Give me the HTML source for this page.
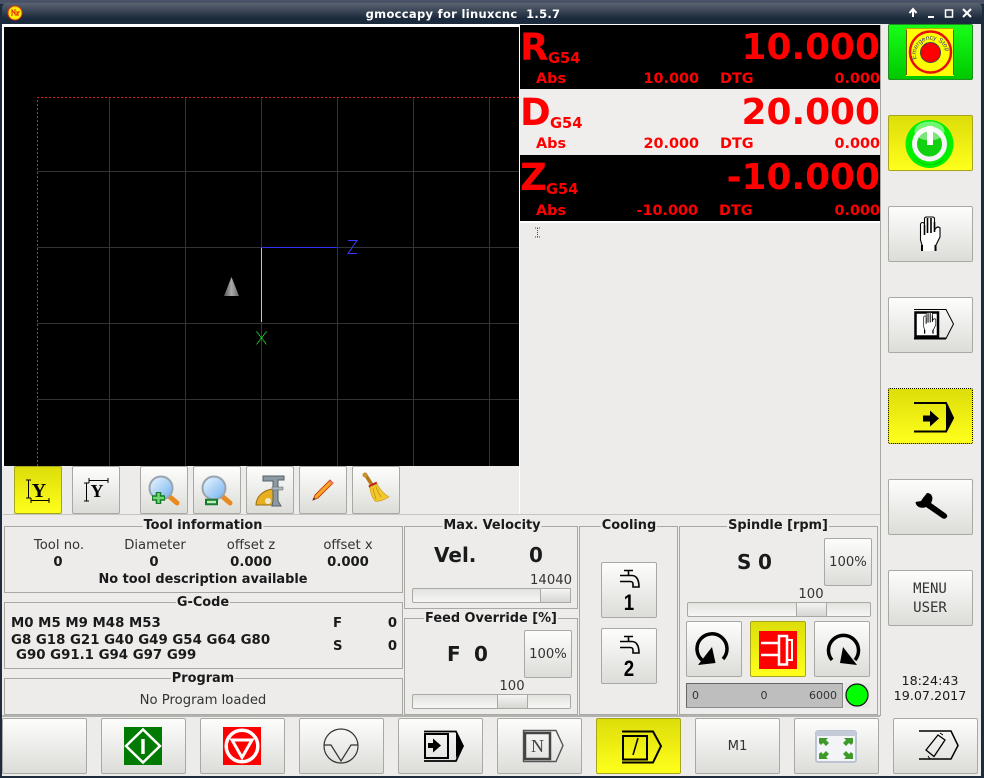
<!DOCTYPE html>
<html><head><meta charset="utf-8"><style>
html,body{margin:0;padding:0}
body{width:984px;height:778px;overflow:hidden;position:relative;background:#edeceb;font-family:"DejaVu Sans","Liberation Sans",sans-serif;color:#1a1a1a;font-size:13.2px}
div{position:absolute;box-sizing:border-box}
.b{border:1px solid #a9a9a4;border-radius:2px;background:linear-gradient(#fdfdfc,#dcdcd8)}
.y{border:1px solid #a5a520;border-radius:2px;background:linear-gradient(#dddd0a,#ffff1c)}
.f{border:1px solid #a9a9a4}
.t{white-space:nowrap;line-height:16px;height:16px}
.c{transform:translateX(-50%)}
.r{transform:translateX(-100%)}
.h{font-weight:bold;background:#edeceb;padding:0 1px;font-size:12.9px}
.w{font-weight:bold}
.d{color:#f00;font-weight:bold;white-space:nowrap;line-height:1}
.sl{border:1px solid #a9a9a4;border-radius:2px;background:linear-gradient(#e2e2de,#f6f6f5)}
.th{border:1px solid #a9a9a4;background:linear-gradient(#f4f4f3,#d6d6d2)}
</style></head><body>
<!-- window chrome -->
<div style="left:0;top:0;width:984px;height:778px;background:#1d2b3d"></div>
<div style="left:0;top:0;width:984px;height:4px;background:#4a5268"></div>
<div style="left:2px;top:3px;width:980px;height:22px;border-radius:5px 5px 0 0;background:linear-gradient(#5b6270,#1b2a3c 70%)"></div>
<div class="t w" style="left:463px;top:6px;color:#fff;font-size:11.5px;letter-spacing:.31px;transform:translateX(-50%);white-space:pre">gmoccapy for linuxcnc  1.5.7</div>
<div style="left:2px;top:24px;width:979px;height:752px;background:#edeceb"></div>
<div style="left:2px;top:24px;width:878px;height:3px;background:#fff"></div>
<div style="left:2px;top:24px;width:2px;height:442px;background:#fff"></div>
<!-- gl canvas -->
<div style="left:4px;top:27px;width:515px;height:439px;background:#000"></div>
<div style="left:519px;top:25px;width:1px;height:490px;background:#fff"></div>
<!-- DRO -->
<div style="left:520px;top:25px;width:360px;height:64px;background:#000"></div>
<div style="left:520px;top:89px;width:360px;height:65px;background:#f0eeed"></div>
<div style="left:520px;top:155px;width:360px;height:66px;background:#000"></div>
<div style="left:520px;top:221px;width:360px;height:2px;background:#fff"></div>
<div style="left:880px;top:25px;width:1px;height:691px;background:#a9a9a4"></div>
<div style="left:2px;top:715px;width:878px;height:2px;background:#b2b2ae"></div>
<div style="left:3px;top:514px;width:877px;height:1px;background:#c4c4c0"></div>

<div class="d" style="left:520px;top:29px;font-size:37px">R</div>
<div class="d" style="left:548px;top:52px;font-size:14.67px">G54</div>
<div class="d r" style="left:880px;top:30px;font-size:35.9px">10.000</div>
<div class="d" style="left:536px;top:72px;font-size:14.4px">Abs</div>
<div class="d r" style="left:699px;top:72px;font-size:14.4px">10.000</div>
<div class="d" style="left:720px;top:72px;font-size:14.4px">DTG</div>
<div class="d r" style="left:880px;top:72px;font-size:14.4px">0.000</div>

<div class="d" style="left:520px;top:94px;font-size:37px">D</div>
<div class="d" style="left:550px;top:117px;font-size:14.67px">G54</div>
<div class="d r" style="left:880px;top:95px;font-size:35.9px">20.000</div>
<div class="d" style="left:536px;top:137px;font-size:14.4px">Abs</div>
<div class="d r" style="left:699px;top:137px;font-size:14.4px">20.000</div>
<div class="d" style="left:720px;top:137px;font-size:14.4px">DTG</div>
<div class="d r" style="left:880px;top:137px;font-size:14.4px">0.000</div>

<div class="d" style="left:520px;top:159px;font-size:37px">Z</div>
<div class="d" style="left:546px;top:183px;font-size:14.67px">G54</div>
<div class="d r" style="left:880px;top:160px;font-size:35.9px">-10.000</div>
<div class="d" style="left:536px;top:204px;font-size:14.4px">Abs</div>
<div class="d r" style="left:698px;top:204px;font-size:14.4px">-10.000</div>
<div class="d" style="left:719px;top:204px;font-size:14.4px">DTG</div>
<div class="d r" style="left:880px;top:204px;font-size:14.4px">0.000</div>

<!-- toolbar -->
<div class="y" style="left:14px;top:466px;width:48px;height:48px"></div>
<div class="b" style="left:72px;top:466px;width:48px;height:48px"></div>
<div class="b" style="left:140px;top:466px;width:48px;height:48px"></div>
<div class="b" style="left:193px;top:466px;width:48px;height:48px"></div>
<div class="b" style="left:246px;top:466px;width:48px;height:48px"></div>
<div class="b" style="left:299px;top:466px;width:48px;height:48px"></div>
<div class="b" style="left:352px;top:466px;width:48px;height:48px"></div>

<!-- frames -->
<div class="f" style="left:4px;top:526px;width:399px;height:67px"></div>
<div class="f" style="left:4px;top:602px;width:399px;height:67px"></div>
<div class="f" style="left:4px;top:678px;width:399px;height:37px"></div>
<div class="f" style="left:404px;top:526px;width:174px;height:83px"></div>
<div class="f" style="left:404px;top:618px;width:174px;height:97px"></div>
<div class="f" style="left:579px;top:526px;width:99px;height:189px"></div>
<div class="f" style="left:679px;top:526px;width:199px;height:189px"></div>

<div class="t h c" style="left:203px;top:518px">Tool information</div>
<div class="t h c" style="left:203px;top:595px">G-Code</div>
<div class="t h c" style="left:203px;top:671px">Program</div>
<div class="t h c" style="left:492px;top:518px">Max. Velocity</div>
<div class="t h c" style="left:491px;top:611px">Feed Override [%]</div>
<div class="t h c" style="left:629px;top:518px">Cooling</div>
<div class="t h c" style="left:778px;top:518px">Spindle [rpm]</div>

<div class="t c" style="left:59px;top:538px;color:#333">Tool no.</div>
<div class="t c" style="left:155px;top:538px;color:#333">Diameter</div>
<div class="t c" style="left:251px;top:538px;color:#333">offset z</div>
<div class="t c" style="left:348px;top:538px;color:#333">offset x</div>
<div class="t w c" style="left:58px;top:555px">0</div>
<div class="t w c" style="left:154px;top:555px">0</div>
<div class="t w c" style="left:251px;top:555px">0.000</div>
<div class="t w c" style="left:348px;top:555px">0.000</div>
<div class="t w c" style="left:203px;top:572px;font-size:12.9px">No tool description available</div>

<div class="t w" style="left:11px;top:616px;font-size:13.33px">M0 M5 M9 M48 M53</div>
<div class="t w" style="left:11px;top:633px;font-size:13.33px">G8 G18 G21 G40 G49 G54 G64 G80</div>
<div class="t w" style="left:16px;top:648px;font-size:13.33px">G90 G91.1 G94 G97 G99</div>
<div class="t w" style="left:333px;top:615.5px">F</div>
<div class="t w" style="left:333px;top:639px">S</div>
<div class="t w r" style="left:397px;top:615.5px">0</div>
<div class="t w r" style="left:397px;top:639px">0</div>
<div class="t c" style="left:203px;top:693px;color:#333">No Program loaded</div>

<div class="w" style="left:434px;top:543px;font-size:20px;line-height:24px;white-space:nowrap">Vel.</div>
<div class="w" style="left:529px;top:543px;font-size:20px;line-height:24px">0</div>
<div class="t r" style="left:572px;top:573px;color:#333">14040</div>
<div class="sl" style="left:412px;top:588px;width:159px;height:15px"></div>
<div class="th" style="left:540px;top:588px;width:31px;height:15px"></div>

<div class="w" style="left:447px;top:642px;font-size:20px;line-height:24px">F</div>
<div class="w" style="left:474px;top:642px;font-size:20px;line-height:24px">0</div>
<div class="b t" style="left:524px;top:630px;width:48px;height:48px;line-height:47px;text-align:center;color:#333">100%</div>
<div class="t c" style="left:512px;top:679px;color:#333">100</div>
<div class="sl" style="left:412px;top:694px;width:159px;height:15px"></div>
<div class="th" style="left:497px;top:694px;width:31px;height:15px"></div>

<div class="b" style="left:601px;top:562px;width:56px;height:56px"></div>
<div class="b" style="left:601px;top:628px;width:56px;height:56px"></div>

<div class="w" style="left:737px;top:550px;font-size:20px;line-height:24px">S</div>
<div class="w" style="left:758px;top:550px;font-size:20px;line-height:24px">0</div>
<div class="b t" style="left:824px;top:538px;width:48px;height:48px;line-height:47px;text-align:center;color:#333">100%</div>
<div class="t c" style="left:811px;top:587px;color:#333">100</div>
<div class="sl" style="left:687px;top:602px;width:184px;height:15px"></div>
<div class="th" style="left:796px;top:602px;width:31px;height:15px"></div>
<div class="b" style="left:686px;top:621px;width:56px;height:56px"></div>
<div class="y" style="left:750px;top:621px;width:56px;height:56px"></div>
<div class="b" style="left:814px;top:621px;width:56px;height:56px"></div>
<div style="left:686px;top:683px;width:157px;height:25px;background:#bebebe;border:1px solid #8a8a8a;border-top-color:#666;border-left-color:#666"></div>
<div class="t" style="left:692px;top:688px;font-size:11px;color:#333">0</div>
<div class="t c" style="left:764px;top:688px;font-size:11px;color:#333">0</div>
<div class="t r" style="left:837px;top:688px;font-size:11px;color:#333">6000</div>
<div style="left:845px;top:683px;width:25px;height:25px;background:#e6e6e6"></div>

<!-- right column -->
<div style="left:888px;top:24px;width:85px;height:56px;border:1px solid #1f8f1f;border-radius:2px;background:linear-gradient(#18ff18,#00c800)"></div>
<div class="y" style="left:888px;top:115px;width:85px;height:56px"></div>
<div class="b" style="left:888px;top:206px;width:85px;height:56px"></div>
<div class="b" style="left:888px;top:297px;width:85px;height:56px"></div>
<div class="y" style="left:888px;top:388px;width:85px;height:56px;border:1px dotted #000"></div>
<div class="b" style="left:888px;top:479px;width:85px;height:56px"></div>
<div class="b" style="left:888px;top:570px;width:85px;height:56px"></div>
<div class="c" style="left:930px;top:580px;font-family:'DejaVu Sans Mono',monospace;font-size:14px;line-height:18.5px;text-align:center;color:#333;white-space:pre">MENU
USER</div>
<div class="t c" style="left:930px;top:673px;font-size:12.7px">18:24:43</div>
<div class="t c" style="left:930px;top:688px;font-size:12.7px">19.07.2017</div>

<!-- bottom row -->
<div class="b" style="left:2px;top:718px;width:85px;height:56px"></div>
<div class="b" style="left:101px;top:718px;width:85px;height:56px"></div>
<div class="b" style="left:200px;top:718px;width:85px;height:56px"></div>
<div class="b" style="left:299px;top:718px;width:85px;height:56px"></div>
<div class="b" style="left:398px;top:718px;width:85px;height:56px"></div>
<div class="b" style="left:497px;top:718px;width:85px;height:56px"></div>
<div class="y" style="left:596px;top:718px;width:85px;height:56px"></div>
<div class="b t" style="left:695px;top:718px;width:85px;height:56px;line-height:55px;text-align:center;color:#333">M1</div>
<div class="b" style="left:794px;top:718px;width:85px;height:56px"></div>
<div class="b" style="left:893px;top:718px;width:85px;height:56px"></div>

<svg width="984" height="778" viewBox="0 0 984 778" style="position:absolute;left:0;top:0" fill="none">
<defs>
<linearGradient id="cone" x1="0" y1="0" x2="1" y2="0"><stop offset="0" stop-color="#555"/><stop offset=".5" stop-color="#aaa"/><stop offset="1" stop-color="#666"/></linearGradient>
<linearGradient id="bin" x1="0" y1="0" x2="1" y2="1"><stop offset="0" stop-color="#f0f8ff"/><stop offset="1" stop-color="#6fb0ee"/></linearGradient>
<path id="arc" d="M917 60 A15 15 0 1 1 945 60"/>
<g id="hand">
<path d="M922 251V245L920.500 240V225Q920.500 222.500 922.500 222.500Q924.500 222.500 924.500 225V219Q924.500 217 926.500 217H932.500Q934.500 217 934.500 219V230L936 228Q938 226 940 228V237L937 243 935.500 246V251" fill="#fff" stroke="#000" stroke-width="1.100"/>
<path d="M924.500 225V235M927.500 218V233M931 218V233M934.500 222V232" stroke="#000" stroke-width="1.600"/>
<path d="M922 245V251M935.500 245V251" stroke="#000" stroke-width="2"/>
</g>
</defs>
<!-- title icons -->
<circle cx="15" cy="13" r="7" fill="#ffee00" stroke="#e83010" stroke-width="1"/>
<path d="M12 16V10L15 14V9M16 12h3l-3 3h3" stroke="#e82010" stroke-width="1"/>
<path d="M913 17V10M909.500 13l3.500-4 3.500 4" stroke="#fff" stroke-width="2"/>
<path d="M928 17h6" stroke="#fff" stroke-width="2"/>
<rect x="945.500" y="10" width="7" height="7" stroke="#fff" stroke-width="1.500"/>
<path d="M963 9l8 8M971 9l-8 8" stroke="#fff" stroke-width="2"/>
<!-- grid -->
<g stroke="#333" stroke-width="1">
<path d="M109.500 97V466M185.500 97V466M261.500 97V466M337.500 97V466M413.500 97V466M489.500 97V466"/>
<path d="M37 171.500H519M37 247.500H519M37 323.500H519M37 399.500H519"/>
</g>
<path d="M37.500 466V97.500H519" stroke="#d82020" stroke-dasharray="2 2"/>
<path d="M261.500 247V322" stroke="#88f088"/>
<path d="M261 247.500H337" stroke="#3030f0"/>
<path d="M348 240.500h9l-9 13h9" stroke="#3a3aff"/>
<path d="M256.500 331.500l10 13M266.500 331.500l-10 13" stroke="#30e030" stroke-dasharray="1.500 .5"/>
<path d="M231.500 277L224 296H239Z" fill="url(#cone)"/>
<!-- cursor -->
<path d="M535 228h5M537.500 228v9M535 237h5" stroke="#444" stroke-dasharray="1 1"/>
<!-- toolbar icons -->
<path d="M28.500 480V498M26 480h5M26 498h5M31 500.500H49M31 498v5M49 498v5" stroke="#000"/>
<text x="39" y="497" font-family="'Liberation Serif',serif" font-weight="bold" font-size="20" fill="#000" text-anchor="middle">Y</text>
<path d="M86.500 483V501M84 483h5M84 501h5M89 480.500H108M89 478v5M108 478v5" stroke="#000"/>
<text x="97" y="497" font-family="'Liberation Serif',serif" font-weight="bold" font-size="18" fill="#000" text-anchor="middle">Y</text>
<!-- magnifiers -->
<path d="M170 497l7 6" stroke="#e88a20" stroke-width="5" stroke-linecap="round"/>
<circle cx="161" cy="488" r="11.500" fill="url(#bin)" stroke="#9aa4ae" stroke-width="2"/>
<path d="M152 498h13M158.500 492v12" stroke="#167a2a" stroke-width="5.500"/>
<path d="M153 498h11M158.500 493v10" stroke="#6fd96f" stroke-width="2.500"/>
<path d="M223 497l7 6" stroke="#e88a20" stroke-width="5" stroke-linecap="round"/>
<circle cx="214" cy="488" r="11.500" fill="url(#bin)" stroke="#9aa4ae" stroke-width="2"/>
<path d="M205 502h13" stroke="#167a2a" stroke-width="6.500"/>
<path d="M207 502h9" stroke="#b6eeb6" stroke-width="2.500"/>
<!-- measuring tool -->
<path d="M256 505C256 497 263 490 273 489L279 505Z" fill="#e8b020" stroke="#9a7010"/>
<circle cx="268" cy="501" r="3" fill="#f0e9d0"/>
<path d="M263 476h21v4h-6v21l3 5h-9l1-5v-20h-10Z" fill="#8c9aa2" stroke="#566068"/>
<path d="M272 487h11v3h-11z" fill="#aab6bc" stroke="#566068" stroke-width=".5"/>
<!-- pencil -->
<path d="M315 495l-2 5 5-2 15-15-3-3Z" fill="#f8a820" stroke="#c83818" stroke-width=".9"/>
<path d="M313 500l1-2.500 1.500 1.500z" fill="#222"/>
<path d="M330 481l3 3" stroke="#f07060" stroke-width="2.500"/>
<!-- broom -->
<path d="M365 474l7 11" stroke="#b87818" stroke-width="3.500"/>
<circle cx="365" cy="475" r="2.500" fill="#c89030"/>
<path d="M369 487l8-4" stroke="#c0202a" stroke-width="3"/>
<path d="M370 487L377 484C380 490 384 494 389 497C384 500 378 502 375 501C372 497 370 492 370 487Z" fill="#f2c82c" stroke="#d09a10" stroke-width=".7"/>
<path d="M376 499c-1-4-3-8-3-11M381 497c-2-3-4-7-5-10" stroke="#b88a10" stroke-width=".7"/>
<!-- e-stop -->
<rect x="906.500" y="28.500" width="47" height="47" fill="#ffff00" stroke="#6a5a10"/>
<path d="M906 29h48M906 75.500h48" stroke="#ffff00"/>
<circle cx="930.500" cy="52" r="20.500" stroke="#e8100c" stroke-width="2.500"/>
<circle cx="930.500" cy="52.500" r="10" fill="#ff0000" stroke="#444" stroke-width="1"/>
<text font-family="'Liberation Sans',sans-serif" font-size="6.500" fill="#303090"><textPath href="#arc" startOffset="1">Emergency Stop</textPath></text>
<!-- power -->
<circle cx="929.500" cy="144" r="24" fill="#00f000"/>
<circle cx="929.500" cy="144" r="15" fill="#10d010" stroke="#f4f4f4" stroke-width="5"/>
<path d="M915 158a19 19 0 0 0 29 0c-3 5-9 7-14.500 7s-11-2-14.500-7Z" fill="#333" opacity=".65"/>
<ellipse cx="929.500" cy="131" rx="15" ry="9.500" fill="#fff" opacity=".45"/>
<path d="M930 126V145" stroke="#fff" stroke-width="6"/>
<!-- hand -->
<use href="#hand"/>
<!-- manual mode -->
<path d="M914 309.500H946L953.500 324 946 338.500H914" stroke="#000"/>
<path d="M914 338.500H946" stroke="#000" stroke-width="2"/>
<rect x="915.500" y="312.500" width="22.500" height="24" fill="#fff" stroke="#000" stroke-width="2.500"/>
<use href="#hand" transform="translate(353 178) scale(.62)"/>
<!-- auto mode sidebar -->
<path d="M914 403H946L953 418 946 431.500H914" stroke="#000" stroke-width="2"/>
<path d="M946 403l8 15-8 15Z" fill="#000"/>
<path d="M923 418.500h8" stroke="#000" stroke-width="6"/>
<path d="M930 410.500l9 8-9 8Z" fill="#000"/>
<!-- wrench -->
<path d="M927 493L923 498 921 501 915.500 502C916 507 921 509 926 507L942 518Q945 520 947 517Q948 515 945 513L931 503C934 498 932 493 927 493Z" fill="#000"/>
<!-- faucets -->
<g stroke="#000" stroke-width="1.600">
<path d="M624 570.500H633M628.500 570V575M620 575.500H632C636 575.500 639 579 639 587H633V584C633 582 632 581.500 630 581.500H620"/>
<path d="M624 636.500H633M628.500 636V641M620 641.500H632C636 641.500 639 645 639 653H633V650C633 648 632 647.500 630 647.500H620"/>
</g>
<text x="629" y="610" font-family="'Liberation Sans',sans-serif" font-weight="bold" font-size="22" fill="#000" text-anchor="middle" transform="translate(94.35 0) scale(.85 1)">1</text>
<text x="629" y="676" font-family="'Liberation Sans',sans-serif" font-weight="bold" font-size="22" fill="#000" text-anchor="middle" transform="translate(94.35 0) scale(.85 1)">2</text>
<!-- spindle icons -->
<path d="M723 659A15 15 0 1 0 702 660" stroke="#000" stroke-width="3.500"/>
<path d="M712 647L715.500 663 698 665Z" fill="#000"/>
<path d="M832 660A15 15 0 1 1 855 660" stroke="#000" stroke-width="3.500"/>
<path d="M843 647L840 663 857 665Z" fill="#000"/>
<rect x="759" y="631" width="38" height="38" fill="#ff0000"/>
<path d="M761 643H779M761 655H779" stroke="#fff" stroke-width="2.500"/>
<rect x="779" y="636" width="8" height="28.500" stroke="#fff" stroke-width="2.500"/>
<rect x="787" y="640" width="5" height="20" stroke="#fff" stroke-width="2"/>
<circle cx="857" cy="695" r="11" fill="#00ff00" stroke="#111" stroke-width="1.200"/>
<!-- edit bottom -->
<path d="M919 731H951L958 745.500 951 759H919" stroke="#000" stroke-width="1.500"/>
<path d="M926 750L938 735 945 740 934 756.500Z" stroke="#000" stroke-width="1.300"/>
<path d="M928 756l2 3M940 733l3 2" stroke="#000"/>
<!-- cycle start -->
<rect x="124" y="727" width="38" height="38" fill="#007a00"/>
<path d="M143 729.500L160 746 143 762.500 126 746Z" stroke="#fff" stroke-width="2.500"/>
<rect x="141.300" y="739" width="3.400" height="15" fill="#fff"/>
<!-- stop -->
<rect x="223" y="727" width="38" height="38" fill="#ff0000"/>
<circle cx="242" cy="746" r="15.800" stroke="#fff" stroke-width="3.500"/>
<path d="M232 740H252L242 757.500Z" stroke="#fff" stroke-width="3"/>
<!-- from line -->
<circle cx="341" cy="746" r="17" stroke="#333" stroke-width="1.200"/>
<path d="M324 745H331L341 761 351 745H358" stroke="#333" stroke-width="1.200"/>
<!-- step -->
<rect x="425" y="734" width="23" height="24" stroke="#000" stroke-width="2"/>
<path d="M424 731.500H456L463 746 456 761H424" stroke="#000" stroke-width="1.700"/>
<path d="M456 733l8 13-8 12Z" fill="#000"/>
<path d="M428 745.500h7" stroke="#000" stroke-width="5"/>
<path d="M433 738.500l8 7-8 7Z" fill="#000"/>
<!-- N -->
<path d="M523.500 730.500H556L563 745.500 556 761.500H523.500Z" stroke="#555" stroke-width="1.400"/>
<rect x="525" y="733" width="25" height="26" stroke="#444" stroke-width="2.500"/>
<text x="537.500" y="752" font-family="'Liberation Serif',serif" font-size="18" fill="#444" text-anchor="middle">N</text>
<!-- slash -->
<rect x="623" y="736" width="24" height="23.500" stroke="#000" stroke-width="2"/>
<path d="M622 731.500H653L661 746 653 762.500H622" stroke="#000" stroke-width="2"/>
<path d="M633 755l5-17" stroke="#000" stroke-width="1.500"/>
<!-- fullscreen -->
<rect x="816" y="731" width="40" height="31" rx="2" fill="#f2f4f8" stroke="#bcc3d2" stroke-width="2"/>
<rect x="816" y="731" width="40" height="5" fill="#c4cad8"/>
<g fill="#3e9a28">
<path d="M819 738h9l-2 2 3 3-3 3-3-3-2 2-2-2Z"/>
<path d="M853 738h-9l2 2-3 3 3 3 3-3 2 2 2-2Z"/>
<path d="M819 759h9l-2-2 3-3-3-3-3 3-2-2-2 2Z"/>
<path d="M853 759h-9l2-2-3-3 3-3 3 3 2-2 2 2Z"/>
</g>
</svg>
</body></html>
